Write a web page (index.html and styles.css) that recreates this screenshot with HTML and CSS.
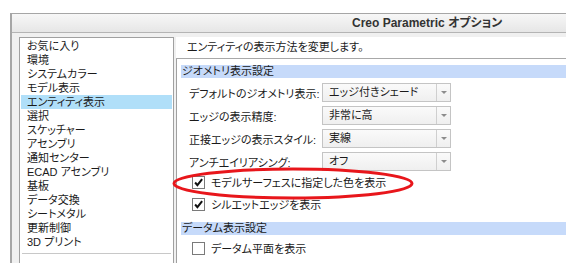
FILE: index.html
```html
<!DOCTYPE html>
<html lang="ja">
<head>
  <meta charset="UTF-8">
  <meta name="viewport" content="width=device-width, initial-scale=1.0">
  <title>Creo Parametric オプション</title>
  <link rel="stylesheet" href="styles.css">
</head>
<body>
  <div class="window">
    <div class="titlebar">Creo Parametric オプション</div>
    <div class="window-body">
      <ul class="nav">
        <li>お気に入り</li>
        <li>環境</li>
        <li>システムカラー</li>
        <li>モデル表示</li>
        <li class="active">エンティティ表示</li>
        <li>選択</li>
        <li>スケッチャー</li>
        <li>アセンブリ</li>
        <li>通知センター</li>
        <li>ECAD アセンブリ</li>
        <li>基板</li>
        <li>データ交換</li>
        <li>シートメタル</li>
        <li>更新制御</li>
        <li>3D プリント</li>
      </ul>

      <div class="main">
        <div class="main-header">エンティティの表示方法を変更します。</div>
        <div class="panel">
          <div class="section-title">ジオメトリ表示設定</div>

          <div class="field">
            <span class="field-label">デフォルトのジオメトリ表示:</span>
            <div class="select"><span>エッジ付きシェード</span><i class="arrow"></i></div>
          </div>
          <div class="field">
            <span class="field-label">エッジの表示精度:</span>
            <div class="select"><span>非常に高</span><i class="arrow"></i></div>
          </div>
          <div class="field">
            <span class="field-label">正接エッジの表示スタイル:</span>
            <div class="select"><span>実線</span><i class="arrow"></i></div>
          </div>
          <div class="field">
            <span class="field-label">アンチエイリアシング:</span>
            <div class="select"><span>オフ</span><i class="arrow"></i></div>
          </div>

          <label class="check checked">
            <span class="box"><svg viewBox="0 0 13 13"><path d="M2.5 6.5 L5.2 9.6 L10.8 2.6" /></svg></span>
            モデルサーフェスに指定した色を表示
          </label>
          <label class="check checked">
            <span class="box"><svg viewBox="0 0 13 13"><path d="M2.5 6.5 L5.2 9.6 L10.8 2.6" /></svg></span>
            シルエットエッジを表示
          </label>

          <div class="section-title second">データム表示設定</div>
          <label class="check">
            <span class="box"></span>
            データム平面を表示
          </label>
        </div>
      </div>
    </div>
  </div>

  <svg class="mark" width="566" height="263" viewBox="0 0 566 263">
    <ellipse cx="293" cy="183.5" rx="119" ry="14.5" />
  </svg>
</body>
</html>
```

FILE: styles.css
```css
body {
  margin: 0;
  background: #fff;
  font-family: "Liberation Sans", "Noto Sans CJK JP", sans-serif;
  font-size: 11px;
  color: #1a1a1a;
  font-feature-settings: "palt";
  overflow: hidden;
}
.window {
  margin: 13px 0 0 10px;
  height: 250px;
  border-top: 1px solid #a6a6a6;
  border-left: 2px solid #a6a6a6;
  background: #f0f0f0;
}
.titlebar {
  height: 18px;
  line-height: 18px;
  padding-left: 340px;
  background: linear-gradient(#f7f7f7, #e6e6e6);
  border-bottom: 1px solid #b4b4b4;
  font-size: 12px;
  font-weight: bold;
  color: #333;
}
.window-body {
  display: flex;
  padding: 4px 0 0 7px;
  height: 227px;
}
.nav {
  list-style: none;
  margin: 0;
  padding: 1px 0 0;
  width: 153px;
  border: 1px solid #a0a0a0;
  border-bottom: none;
  background: #fff;
}
.nav::after {
  content: "";
  display: block;
  margin: 4px 2px 0;
  border-top: 1px solid #c8c8c8;
}
.nav li {
  height: 14px;
  line-height: 14px;
  margin: 0 1px;
  padding-left: 6px;
  white-space: nowrap;
}
.nav li.active {
  background: #b0dff9;
}
.main {
  flex: 1;
  margin-left: 2px;
  display: flex;
  flex-direction: column;
}
.main-header {
  height: 21px;
  line-height: 21px;
  padding-left: 11px;
  background: #fff;
  border-bottom: 1px solid #a8a8a8;
}
.panel {
  flex: 1;
  padding: 6px 0 0 4px;
  background: #fff;
  border-left: 1px solid #a0a0a0;
}
.section-title {
  height: 13px;
  line-height: 13px;
  padding-left: 1px;
  background: #c6dafa;
}
.section-title.second {
  margin-top: 7px;
}
.field {
  display: flex;
  align-items: center;
  margin-top: 4px;
  height: 19px;
}
.section-title + .field {
  margin-top: 5px;
}
.field-label {
  width: 133px;
  padding-left: 8px;
  white-space: nowrap;
}
.select {
  display: flex;
  width: 127px;
  height: 17px;
  line-height: 17px;
  border: 1px solid #c4c4c4;
  background: linear-gradient(#fafafa, #efefef);
}
.select span {
  flex: 1;
  padding-left: 6px;
}
.select .arrow {
  width: 13px;
  border-left: 1px solid #cfcfcf;
  position: relative;
}
.select .arrow::after {
  content: "";
  position: absolute;
  left: 4px;
  top: 7px;
  border-left: 3px solid transparent;
  border-right: 3px solid transparent;
  border-top: 3px solid #8c8c8c;
}
.check {
  display: flex;
  align-items: center;
  height: 22px;
  padding-left: 11px;
  white-space: nowrap;
}
.panel .field:last-of-type {
  margin-bottom: 1px;
}
.check .box {
  width: 11px;
  height: 11px;
  margin-right: 6px;
  border: 1px solid #7a7a7a;
  background: #fff;
  display: flex;
}
.check .box svg {
  width: 13px;
  height: 13px;
  margin: -1px 0 0 0;
}
.check .box path {
  fill: none;
  stroke: #111;
  stroke-width: 2.4;
}
.section-title.second + .check {
  margin-top: 2px;
}
.mark {
  position: absolute;
  left: 0;
  top: 0;
  pointer-events: none;
}
.mark ellipse {
  fill: none;
  stroke: #e8161b;
  stroke-width: 3;
}
```
